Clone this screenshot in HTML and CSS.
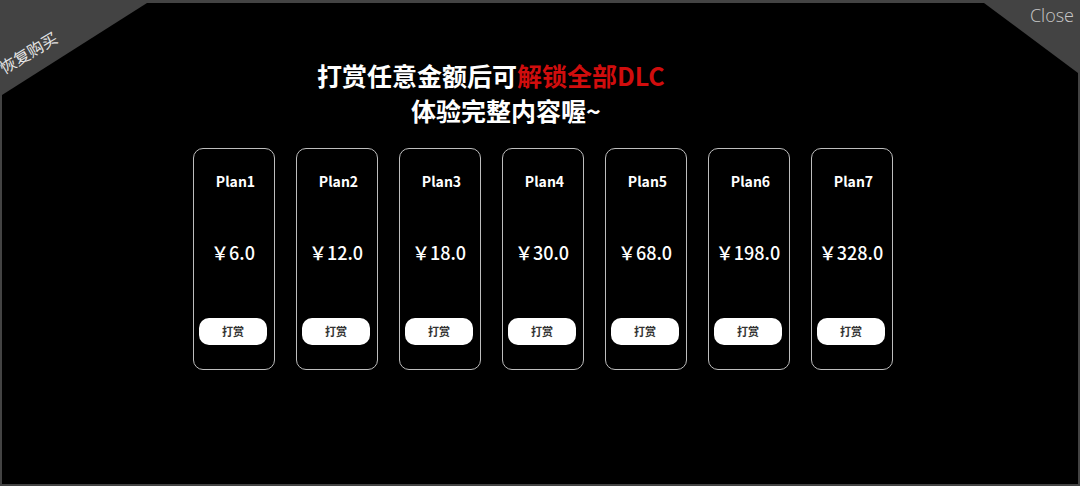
FILE: index.html
```html
<!DOCTYPE html>
<html lang="zh-CN">
<head>
<meta charset="utf-8">
<title>DLC</title>
<link rel="stylesheet" href="styles.css">
</head>
<body>
<div class="frame">
  <div class="panel">
    <div class="title">
      <div class="line1">打赏任意金额后可<span class="red">解锁全部DLC</span></div>
      <div class="line2">体验完整内容喔~</div>
    </div>
    <div class="plans">
      <div class="card"><div class="plan">Plan1</div><div class="price">￥6.0</div><div class="btn">打赏</div></div>
      <div class="card"><div class="plan">Plan2</div><div class="price">￥12.0</div><div class="btn">打赏</div></div>
      <div class="card"><div class="plan">Plan3</div><div class="price">￥18.0</div><div class="btn">打赏</div></div>
      <div class="card"><div class="plan">Plan4</div><div class="price">￥30.0</div><div class="btn">打赏</div></div>
      <div class="card"><div class="plan">Plan5</div><div class="price">￥68.0</div><div class="btn">打赏</div></div>
      <div class="card"><div class="plan">Plan6</div><div class="price">￥198.0</div><div class="btn">打赏</div></div>
      <div class="card"><div class="plan">Plan7</div><div class="price">￥328.0</div><div class="btn">打赏</div></div>
    </div>
  </div>
  <div class="restore">恢复购买</div>
  <div class="close">Close</div>
</div>
</body>
</html>
```
FILE: styles.css
```css
* { box-sizing: border-box; }
html, body {
  margin: 0;
  padding: 0;
  width: 1080px;
  height: 486px;
  overflow: hidden;
  background: #434343;
  font-family: "Noto Sans CJK SC", "Noto Sans", sans-serif;
}
.frame {
  position: relative;
  width: 1080px;
  height: 486px;
  padding: 3px 2px 2px 2px;
}
.panel {
  width: 1076px;
  height: 481px;
  background: #000;
  clip-path: polygon(145px 0, 982px 0, 1076px 70px, 1076px 481px, 0 481px, 0 92px);
  display: flex;
  flex-direction: column;
}
.title {
  margin-top: 55px;
  padding-left: 315px;
  color: #fff;
  font-weight: 700;
  font-size: 25px;
  line-height: 35px;
  display: flex;
  flex-direction: column;
  align-items: flex-start;
}
.title .red { color: #d00d0d; }
.title .line2 { margin-left: 94px; }
.plans {
  margin-top: 20px;
  padding-left: 191px;
  display: flex;
  gap: 21px;
}
.card {
  width: 82px;
  height: 222px;
  border: 1px solid #bdbdbd;
  border-radius: 10px;
  display: flex;
  flex-direction: column;
  align-items: center;
  padding-top: 22px;
}
.plan {
  color: #fff;
  font-weight: 700;
  font-size: 14px;
  line-height: 20px;
  padding-left: 3px;
}
.price {
  margin-top: 49px;
  color: #fff;
  font-weight: 500;
  font-size: 18px;
  line-height: 24px;
  margin-right: 2px;
}
.btn {
  margin-top: 54px;
  width: 68px;
  height: 27px;
  background: #fff;
  border-radius: 10px;
  color: #333;
  font-size: 11px;
  font-weight: 700;
  line-height: 27px;
  text-align: center;
  margin-right: 2px;
}
.restore {
  position: absolute;
  left: -4px;
  top: 42px;
  color: #e6e6e6;
  font-size: 16px;
  line-height: 20px;
  transform: rotate(-31deg);
  transform-origin: center;
}
.close {
  position: absolute;
  right: 6px;
  top: 3px;
  color: #c8c8c8;
  font-family: "Open Sans", "Noto Sans", sans-serif;
  font-weight: 300;
  font-size: 18px;
  line-height: 24px;
}
```
